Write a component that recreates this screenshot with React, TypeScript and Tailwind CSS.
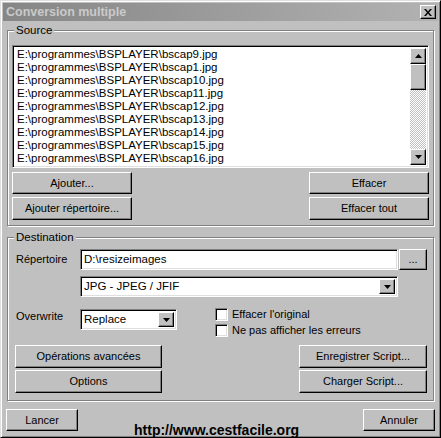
import React from "react";

const files = [
  "bscap9.jpg",
  "bscap1.jpg",
  "bscap10.jpg",
  "bscap11.jpg",
  "bscap12.jpg",
  "bscap13.jpg",
  "bscap14.jpg",
  "bscap15.jpg",
  "bscap16.jpg",
  "bscap17.jpg",
];

// raised 3d button, win9x style
const raised =
  "bg-[#c0c0c0] border border-t-white border-l-white border-r-black border-b-black shadow-[inset_-1px_-1px_0_#808080]";
const sunken =
  "bg-white border border-t-[#808080] border-l-[#808080] border-r-white border-b-white shadow-[inset_1px_1px_0_#000,inset_-1px_-1px_0_#dfdfdf]";
const groove =
  "relative border border-[#808080] shadow-[inset_1px_1px_0_#fff,1px_1px_0_#fff]";

function Btn({ label, className }: { label: string; className: string }) {
  return (
    <button className={`${raised} ${className} flex items-center justify-center text-black`}>
      {label}
    </button>
  );
}

function Arrow({ up = false }: { up?: boolean }) {
  return (
    <svg width="7" height="4" viewBox="0 0 7 4" className="block">
      {up ? <path d="M3.5 0L7 4H0z" fill="#000" /> : <path d="M0 0h7L3.5 4z" fill="#000" />}
    </svg>
  );
}

function Combo({ value, className }: { value: string; className: string }) {
  return (
    <div className={`${sunken} ${className} flex items-center p-[2px]`}>
      <span className="flex-1 pl-[1px] leading-none text-[11.5px]">{value}</span>
      <div className={`${raised} w-[16px] h-[15px] flex items-center justify-center`}>
        <Arrow />
      </div>
    </div>
  );
}

function Check({ label }: { label: string }) {
  return (
    <div className="flex items-center gap-[4px] h-[14px]">
      <div className={`${sunken} w-[13px] h-[13px]`} />
      <span>{label}</span>
    </div>
  );
}

export default function App() {
  return (
    <div className="relative w-[441px] h-[438px] overflow-hidden bg-[#c0c0c0] border border-t-[#dfdfdf] border-l-[#dfdfdf] border-r-black border-b-black shadow-[inset_1px_1px_0_#fff,inset_-1px_-1px_0_#808080] p-[2px] text-[11px] text-black font-['Liberation_Sans',Arial,sans-serif]">
      {/* title bar */}
      <div className="h-[18px] bg-gradient-to-r from-[#868686] to-[#b2b2b2] flex items-center justify-between pl-[3px] pr-[2px]">
        <span className="font-bold text-[12.5px] text-[#cacaca]">Conversion multiple</span>
        <div className={`${raised} w-[16px] h-[14px] flex items-center justify-center`}>
          <svg width="8" height="7" viewBox="0 0 8 7">
            <path d="M0 0h2l2 2.5L6 0h2L5 3.5 8 7H6L4 4.5 2 7H0l3-3.5z" fill="#000" />
          </svg>
        </div>
      </div>

      {/* Source */}
      <div className={`${groove} mt-[9px] mx-[4px] h-[196px] pt-[14px] pl-[4px]`}>
        <span className="absolute -top-[8px] left-[6px] px-[2px] bg-[#c0c0c0] leading-[14px] text-[11.5px]">Source</span>
        <div className={`${sunken} w-[417px] h-[123px] flex p-[2px] overflow-hidden`}>
          <div className="flex-1 pl-[2px] overflow-hidden text-[11.5px]">
            {files.map((f) => (
              <div key={f} className="h-[13px] leading-[13px] whitespace-nowrap">
                E:\programmes\BSPLAYER\{f}
              </div>
            ))}
          </div>
          <div className="w-[16px] flex flex-col">
            <div className={`${raised} h-[16px] flex items-center justify-center`}>
              <Arrow up />
            </div>
            <div className={`${raised} h-[26px]`} />
            <div className="flex-1 bg-[repeating-conic-gradient(#c0c0c0_0_25%,#fff_0_50%)] bg-[length:2px_2px]" />
            <div className={`${raised} h-[16px] flex items-center justify-center`}>
              <Arrow />
            </div>
          </div>
        </div>
        <div className="w-[417px] flex justify-between mt-[4px]">
          <div className="flex flex-col gap-[3px]">
            <Btn label="Ajouter..." className="w-[120px] h-[22px]" />
            <Btn label="Ajouter répertoire..." className="w-[120px] h-[23px]" />
          </div>
          <div className="flex flex-col gap-[3px]">
            <Btn label="Effacer" className="w-[120px] h-[22px]" />
            <Btn label="Effacer tout" className="w-[120px] h-[23px]" />
          </div>
        </div>
      </div>

      {/* Destination */}
      <div className={`${groove} mt-[11px] mx-[4px] h-[164px] pt-[11px] pl-[8px]`}>
        <span className="absolute -top-[8px] left-[6px] px-[2px] bg-[#c0c0c0] leading-[14px] text-[11.5px]">Destination</span>
        <div className="flex items-center">
          <span className="w-[64px]">Répertoire</span>
          <div className={`${sunken} w-[318px] h-[21px] flex items-center pl-[3px] text-[11.5px]`}>D:\resizeimages</div>
          <Btn label="..." className="w-[28px] h-[21px] ml-[1px]" />
        </div>
        <Combo value="JPG - JPEG / JFIF" className="ml-[64px] mt-[6px] w-[318px] h-[21px]" />
        <div className="flex items-start mt-[10px]">
          <span className="w-[64px] pt-[1px]">Overwrite</span>
          <Combo value="Replace" className="w-[97px] h-[21px] mt-[2px]" />
          <div className="ml-[38px] flex flex-col gap-[2px]">
            <Check label="Effacer l'original" />
            <Check label="Ne pas afficher les erreurs" />
          </div>
        </div>
        <div className="flex justify-between mt-[8px] -ml-[1px] pr-[6px]">
          <div className="flex flex-col gap-[2px]">
            <Btn label="Opérations avancées" className="w-[147px] h-[23px]" />
            <Btn label="Options" className="w-[147px] h-[23px]" />
          </div>
          <div className="flex flex-col gap-[2px]">
            <Btn label="Enregistrer Script..." className="w-[128px] h-[23px]" />
            <Btn label="Charger Script..." className="w-[128px] h-[23px]" />
          </div>
        </div>
      </div>

      {/* bottom buttons */}
      <div className="flex justify-between mt-[8px] px-[3px]">
        <Btn label="Lancer" className="w-[72px] h-[22px]" />
        <Btn label="Annuler" className="w-[72px] h-[22px]" />
      </div>

      <span className="absolute left-[133px] top-[421px] font-bold text-[14px] leading-[16px] font-['Liberation_Sans',Arial,sans-serif]">
        http://www.cestfacile.org
      </span>
    </div>
  );
}
